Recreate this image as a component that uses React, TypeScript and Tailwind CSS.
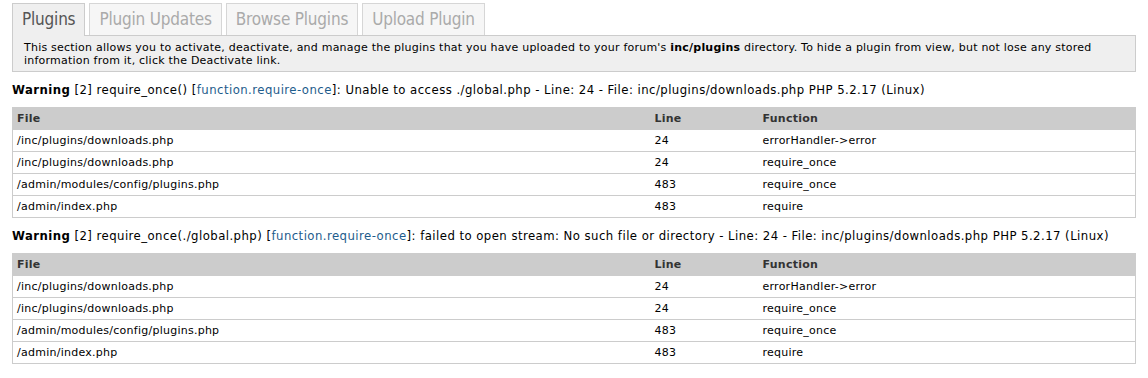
import type { FunctionComponent } from "react";

type TraceRow = { file: string; line: string; fn: string };

const rows: TraceRow[] = [
  { file: "/inc/plugins/downloads.php", line: "24", fn: "errorHandler->error" },
  { file: "/inc/plugins/downloads.php", line: "24", fn: "require_once" },
  { file: "/admin/modules/config/plugins.php", line: "483", fn: "require_once" },
  { file: "/admin/index.php", line: "483", fn: "require" },
];

const tabs = ["Plugin Updates", "Browse Plugins", "Upload Plugin"];

const TraceTable: FunctionComponent = () => {
  return (
    <table className="w-full border-collapse border border-[#cccccc] text-[11px] tracking-[0.25px] font-['DejaVu_Sans',sans-serif] text-[#000]">
      <thead>
        <tr className="h-[22px] bg-[#cccccc] text-[#333] text-left">
          <th className="pl-[4px] pt-[2px] font-bold">File</th>
          <th className="w-[108px] pl-[5px] pt-[2px] font-bold">Line</th>
          <th className="w-[378px] pl-[5px] pt-[2px] font-bold">Function</th>
        </tr>
      </thead>
      <tbody>
        {rows.map((r, i) => (
          <tr key={i} className="h-[22px] border-t border-[#cccccc] bg-white">
            <td className="pl-[4px] pt-px">{r.file}</td>
            <td className="pl-[5px] pt-px">{r.line}</td>
            <td className="pl-[5px] pt-px">{r.fn}</td>
          </tr>
        ))}
      </tbody>
    </table>
  );
};

const Warning: FunctionComponent<{ call: string; message: string }> = ({ call, message }) => {
  return (
    <div className="pt-[10px] pb-[9px] text-[13px] leading-[16px] tracking-[0.45px] font-['DejaVu_Sans_Condensed','DejaVu_Sans',sans-serif] text-[#000]">
      <b>Warning</b> [2] {call} [<span className="text-[#1e5c8c]">function.require-once</span>]: {message} - Line: 24 - File:
      inc/plugins/downloads.php PHP 5.2.17 (Linux)
    </div>
  );
};

export default function App() {
  return (
    <div className="w-[1148px] h-[378px] bg-white px-3 pt-[3px]">
      <div className="flex items-end gap-1 font-['DejaVu_Sans_Condensed','DejaVu_Sans',sans-serif] text-[17px] tracking-[-0.2px]">
        <div className="relative z-10 -mb-px h-[33px] px-[9px] flex items-center border border-b-0 border-[#cccccc] bg-[#efefef] text-[#555]">
          Plugins
        </div>
        {tabs.map((t) => (
          <div key={t} className="h-[32px] px-[9px] flex items-center border border-b-0 border-[#d6d6d6] bg-[#f6f6f6] text-[#aaaaaa]">
            {t}
          </div>
        ))}
      </div>
      <div className="border border-[#cccccc] bg-[#efefef] px-[11px] pt-[5px] pb-[4px] text-[11px] leading-[13px] tracking-[0.22px] font-['DejaVu_Sans',sans-serif] text-[#000]">
        This section allows you to activate, deactivate, and manage the plugins that you have uploaded to your forum's{" "}
        <b>inc/plugins</b> directory. To hide a plugin from view, but not lose any stored information from it, click the
        Deactivate link.
      </div>
      <Warning call="require_once()" message="Unable to access ./global.php" />
      <TraceTable />
      <Warning call="require_once(./global.php)" message="failed to open stream: No such file or directory" />
      <TraceTable />
    </div>
  );
}
